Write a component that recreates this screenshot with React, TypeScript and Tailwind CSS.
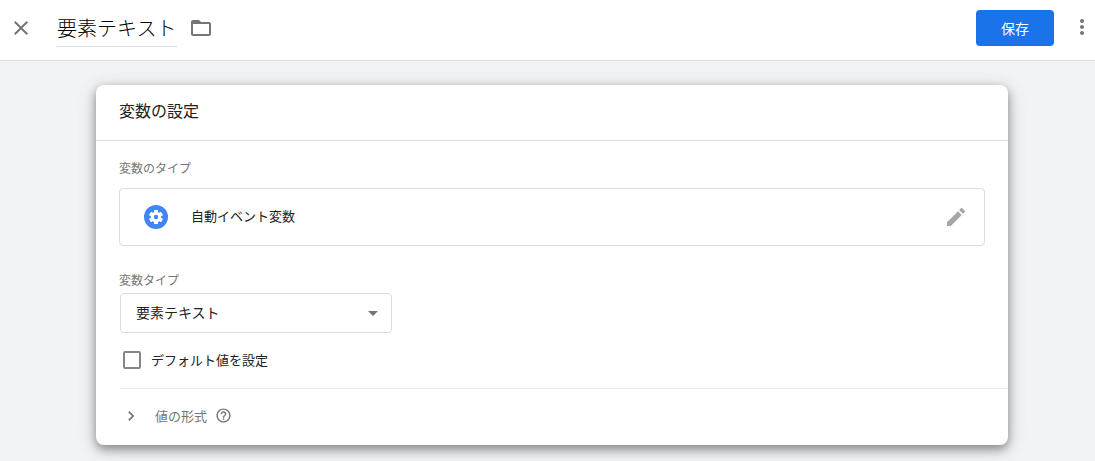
import * as React from "react";
import {
  MdArrowDropDown,
  MdChevronRight,
  MdClose,
  MdEdit,
  MdFolderOpen,
  MdHelpOutline,
  MdMoreVert,
} from "react-icons/md";

const Header: React.FC = () => {
  const [name, setName] = React.useState("要素テキスト");

  return (
    <header className="flex items-start h-[61px] pl-[9px] pr-px bg-white border-b border-[#dadce0]">
      <button aria-label="閉じる" className="mt-4 text-[#757575]">
        <MdClose className="w-6 h-6" />
      </button>
      <input
        aria-label="変数名"
        value={name}
        onChange={(e) => setName(e.target.value)}
        className="ml-6 mt-[11px] w-[120px] h-9 pb-0.5 text-xl leading-8 font-light text-black border-b border-[#dadce0] outline-none"
      />
      <button aria-label="フォルダ" className="ml-3 mt-4 text-[#757575]">
        <MdFolderOpen className="w-6 h-6" />
      </button>
      <button className="ml-auto mt-2.5 w-[78px] h-9 text-sm text-white bg-[#1a73e8] rounded">
        保存
      </button>
      <button aria-label="その他" className="ml-4 mt-[15px] text-[#757575]">
        <MdMoreVert className="w-6 h-6" />
      </button>
    </header>
  );
};

const GearBadge: React.FC = () => (
  <svg viewBox="0 0 24 24" className="w-6 h-6" aria-hidden="true">
    <circle cx="12" cy="12" r="12" fill="#4285f4" />
    <g fill="#fff">
      <circle cx="12" cy="12" r="5.2" />
      <rect x="10" y="5" width="4" height="14" rx="0.6" />
      <rect x="10" y="5" width="4" height="14" rx="0.6" transform="rotate(60 12 12)" />
      <rect x="10" y="5" width="4" height="14" rx="0.6" transform="rotate(120 12 12)" />
    </g>
    <circle cx="12" cy="12" r="2.2" fill="#4285f4" />
  </svg>
);

const VariableType: React.FC = () => (
  <button
    aria-label="変数のタイプを編集"
    className="flex items-center w-full h-[58px] mt-2.5 pl-6 pr-4 border border-[#dadce0] rounded"
  >
    <GearBadge />
    <span className="ml-[23px] pb-0.5 text-[13px] leading-5 text-[#202124]">自動イベント変数</span>
    <MdEdit className="ml-auto w-6 h-6 text-[#a6a6a6]" />
  </button>
);

const ElementSelect: React.FC = () => (
  <div className="grid items-center mt-[3px] ml-px w-[272px]">
    <select
      id="element-type"
      className="col-start-1 row-start-1 w-full h-10 pl-[15px] pr-10 pb-0.5 text-sm text-[#202124] bg-white border border-[#dadce0] rounded appearance-none"
    >
      <option>要素テキスト</option>
    </select>
    <MdArrowDropDown className="col-start-1 row-start-1 justify-self-end mr-[7px] w-6 h-6 text-[#757575] pointer-events-none" />
  </div>
);

export default function App() {
  return (
    <div className="min-h-screen pb-4 bg-[#f1f3f4] font-['Noto_Sans_CJK_JP',sans-serif]">
      <Header />
      <main className="pt-6 pl-24 pr-[87px]">
        <section className="bg-white rounded-lg shadow-[0_4px_10px_rgba(0,0,0,0.36),0_4px_20px_rgba(0,0,0,0.18)]">
          <h2 className="h-14 pl-[23px] pt-[13px] text-base leading-6 text-[#202124] border-b border-[#dadce0]">
            変数の設定
          </h2>

          <div className="pt-[17px] px-[23px]">
            <p className="text-xs leading-5 text-[#757575]">変数のタイプ</p>
            <VariableType />

            <label htmlFor="element-type" className="block mt-6 text-xs leading-5 text-[#757575]">
              変数タイプ
            </label>
            <ElementSelect />

            <label className="flex items-center gap-2.5 mt-[17px] ml-1 text-[13px] leading-5 text-[#202124]">
              <input
                type="checkbox"
                className="w-[18px] h-[18px] border-2 border-[#80868b] rounded-xs appearance-none checked:bg-[#1a73e8] checked:border-[#1a73e8]"
              />
              デフォルト値を設定
            </label>
          </div>

          {/* 折りたたみ */}
          <div className="flex items-center h-[57px] mt-[18px] ml-6 pb-0.5 border-t border-[#e8eaed]">
            <button className="flex items-center text-[13px] leading-5 text-[#757575]">
              <MdChevronRight className="w-5 h-5 ml-px mr-3.5" />
              値の形式
            </button>
            <button aria-label="ヘルプ" className="ml-2 mb-0.5 text-[#757575]">
              <MdHelpOutline className="w-[17px] h-[17px]" />
            </button>
          </div>
        </section>
      </main>
    </div>
  );
}
